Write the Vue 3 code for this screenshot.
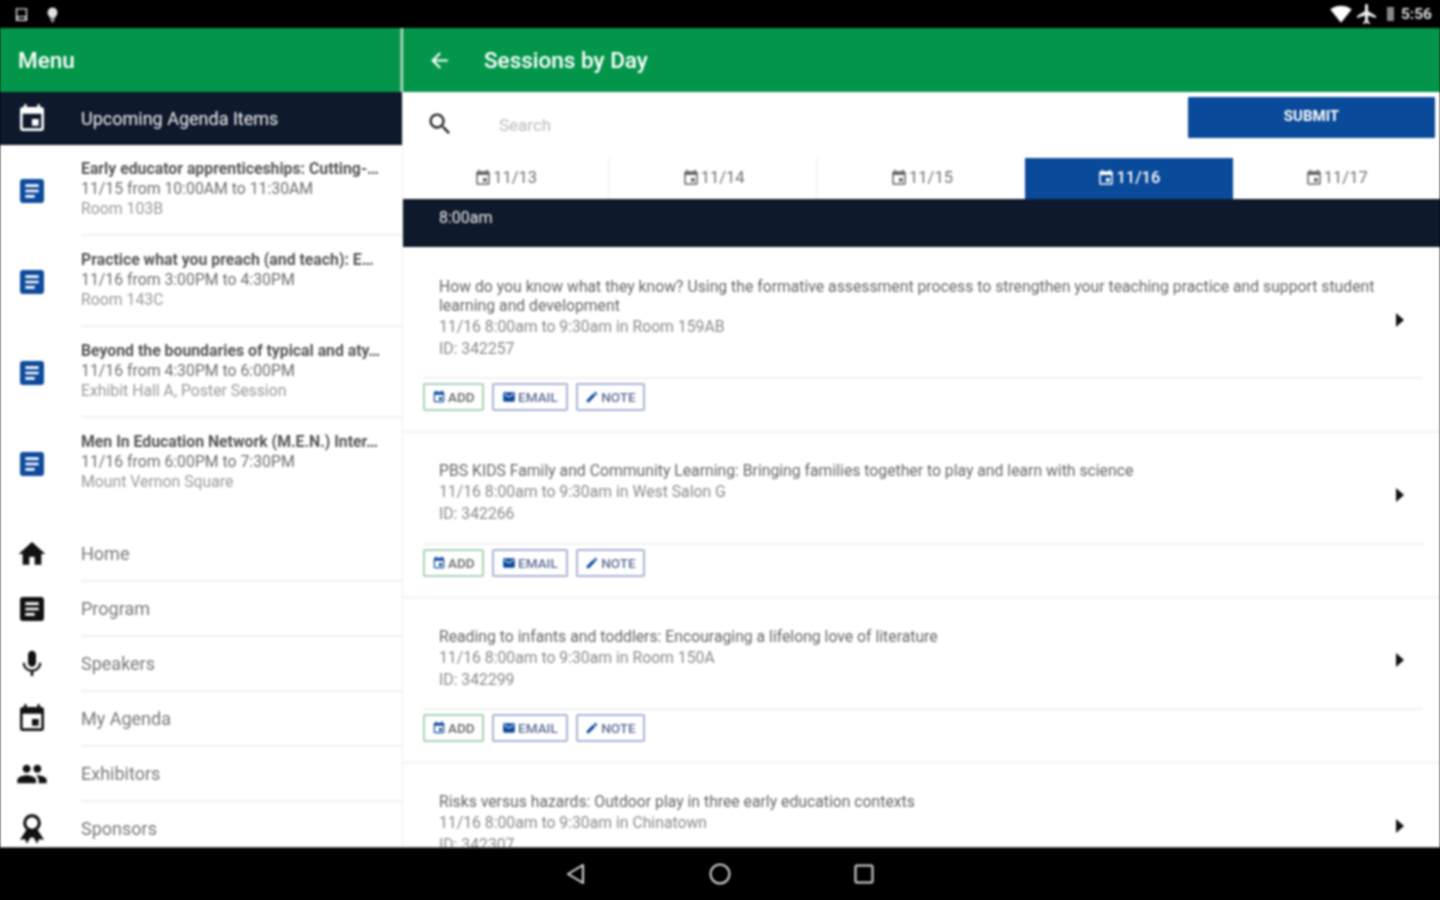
<script setup>
const p = {
  event: 'M17 12h-5v5h5v-5zM16 1v2H8V1H6v2H5c-1.11 0-1.99.9-1.99 2L3 19c0 1.1.89 2 2 2h14c1.1 0 2-.9 2-2V5c0-1.1-.9-2-2-2h-1V1h-2zm3 18H5V8h14v11z',
  doc: 'M19 3H5c-1.1 0-2 .9-2 2v14c0 1.1.9 2 2 2h14c1.1 0 2-.9 2-2V5c0-1.1-.9-2-2-2zm-5 14H7v-2h7v2zm3-4H7v-2h10v2zm0-4H7V7h10v2z',
  home: 'M10 20v-6h4v6h5v-8h3L12 3 2 12h3v8z',
  mic: 'M12 14c1.66 0 2.99-1.34 2.99-3L15 5c0-1.66-1.34-3-3-3S9 3.34 9 5v6c0 1.66 1.34 3 3 3zm5.3-3c0 3-2.54 5.1-5.3 5.1S6.7 14 6.7 11H5c0 3.41 2.72 6.23 6 6.72V21h2v-3.28c3.28-.48 6-3.3 6-6.72h-1.7z',
  people: 'M16 11c1.66 0 2.99-1.34 2.99-3S17.66 5 16 5c-1.66 0-3 1.34-3 3s1.34 3 3 3zm-8 0c1.66 0 2.99-1.34 2.99-3S9.66 5 8 5C6.34 5 5 6.34 5 8s1.34 3 3 3zm0 2c-2.33 0-7 1.17-7 3.5V19h14v-2.5c0-2.33-4.67-3.5-7-3.5zm8 0c-.29 0-.62.02-.97.05 1.16.84 1.97 1.97 1.97 3.45V19h6v-2.5c0-2.33-4.67-3.5-7-3.5z',
  sponsor: 'M12 1a6.5 6.5 0 0 0-4.2 11.5L3 20l3.8-.3L8.2 23l2.8-5 1 1 1-1 2.8 5 1.4-3.3 3.8.3-4.8-7.5A6.5 6.5 0 0 0 12 1zm0 2.2a4.3 4.3 0 1 1 0 8.6a4.3 4.3 0 0 1 0-8.6z',
  search: 'M15.5 14h-.79l-.28-.27C15.41 12.59 16 11.11 16 9.5 16 5.91 13.09 3 9.5 3S3 5.91 3 9.5 5.91 16 9.5 16c1.61 0 3.09-.59 4.23-1.57l.27.28v.79l5 4.99L20.49 19l-4.99-5zm-6 0C7.01 14 5 11.99 5 9.5S7.01 5 9.5 5 14 7.01 14 9.5 11.99 14 9.5 14z',
  back: 'M20 11H7.83l5.59-5.59L12 4l-8 8 8 8 1.41-1.41L7.83 13H20v-2z',
  right: 'M9 5l8 7-8 7z',
  email: 'M20 4H4c-1.1 0-1.99.9-1.99 2L2 18c0 1.1.9 2 2 2h16c1.1 0 2-.9 2-2V6c0-1.1-.9-2-2-2zm0 4l-8 5-8-5V6l8 5 8-5v2z',
  pencil: 'M3 17.25V21h3.75L17.81 9.94l-3.75-3.75L3 17.25zM20.71 7.04c.39-.39.39-1.02 0-1.41l-2.34-2.34c-.39-.39-1.02-.39-1.41 0l-1.83 1.83 3.75 3.75 1.83-1.83z',
  wifi: 'M12.01 21.49L23.64 7c-.45-.34-4.93-4-11.64-4C5.28 3 .81 6.66.36 7l11.63 14.49.01.01.01-.01z',
  plane: 'M21 16v-2l-8-5V3.5c0-.83-.67-1.5-1.5-1.5S10 2.67 10 3.5V9l-8 5v2l8-2.5V19l-2 1.5V22l3.5-1 3.5 1v-1.5L13 19v-5.5l8 2.5z'
}
const agenda = [
  { t: 'Early educator apprenticeships: Cutting-…', d: '11/15 from 10:00AM to 11:30AM', r: 'Room 103B' },
  { t: 'Practice what you preach (and teach): E…', d: '11/16 from 3:00PM to 4:30PM', r: 'Room 143C' },
  { t: 'Beyond the boundaries of typical and aty…', d: '11/16 from 4:30PM to 6:00PM', r: 'Exhibit Hall A, Poster Session' },
  { t: 'Men In Education Network (M.E.N.) Inter…', d: '11/16 from 6:00PM to 7:30PM', r: 'Mount Vernon Square' }
]
const menu = [
  { n: 'Home', i: p.home }, { n: 'Program', i: p.doc }, { n: 'Speakers', i: p.mic },
  { n: 'My Agenda', i: p.event }, { n: 'Exhibitors', i: p.people }, { n: 'Sponsors', i: p.sponsor }
]
const tabs = ['11/13', '11/14', '11/15', '11/16', '11/17']
const sessions = [
  { t: 'How do you know what they know? Using the formative assessment process to strengthen your teaching practice and support student learning and development', m: '11/16 8:00am to 9:30am in Room 159AB', id: 'ID: 342257' },
  { t: 'PBS KIDS Family and Community Learning: Bringing families together to play and learn with science', m: '11/16 8:00am to 9:30am in West Salon G', id: 'ID: 342266' },
  { t: 'Reading to infants and toddlers: Encouraging a lifelong love of literature', m: '11/16 8:00am to 9:30am in Room 150A', id: 'ID: 342299' },
  { t: 'Risks versus hazards: Outdoor play in three early education contexts', m: '11/16 8:00am to 9:30am in Chinatown', id: 'ID: 342307' }
]
</script>

<template>
  <div class="screen">
    <header class="status">
      <div class="status-side">
        <svg class="st-ic" viewBox="0 0 24 24"><path fill="#d8d8d8" d="M4 3h16v18H4zM6 5v9h12V5zM7 16v3h10v-3z"/></svg>
        <svg class="st-ic" viewBox="0 0 24 24"><path fill="#e2e2e2" d="M12 2a7 7 0 0 0-4 12.7V17h8v-2.3A7 7 0 0 0 12 2zM9 18h6v2H9zM10 21h4v1.5h-4z"/></svg>
      </div>
      <div class="status-right">
        <svg class="st-wifi" viewBox="0 0 24 24"><path fill="#fff" :d="p.wifi"/></svg>
        <svg class="st-plane" viewBox="0 0 24 24"><path fill="#eee" :d="p.plane"/></svg>
        <span class="battery"></span>
        <span class="clock">5:56</span>
      </div>
    </header>

    <main class="body">
      <aside class="drawer">
        <div class="bar drawer-bar">Menu</div>
        <div class="up-head">
          <svg class="ic" viewBox="0 0 24 24"><path fill="#fff" :d="p.event"/></svg>
          <span>Upcoming Agenda Items</span>
        </div>
        <div class="agenda">
          <div v-for="a in agenda" :key="a.t" class="a-row">
            <svg class="ic" viewBox="0 0 24 24"><path fill="#0d4a9c" :d="p.doc"/></svg>
            <div class="a-text">
              <div class="a-title">{{ a.t }}</div>
              <div class="a-date">{{ a.d }}</div>
              <div class="a-room">{{ a.r }}</div>
            </div>
          </div>
        </div>
        <nav class="menu">
          <div v-for="m in menu" :key="m.n" class="m-row">
            <svg class="ic" viewBox="0 0 24 24"><path fill="#111" fill-rule="evenodd" :d="m.i"/></svg>
            <span class="m-label">{{ m.n }}</span>
          </div>
        </nav>
      </aside>

      <section class="content">
        <div class="bar content-bar">
          <svg class="back" viewBox="0 0 24 24"><path fill="#fff" :d="p.back"/></svg>
          <span>Sessions by Day</span>
        </div>
        <div class="search-row">
          <svg class="search-ic" viewBox="0 0 24 24"><path fill="#222" :d="p.search"/></svg>
          <span class="search-ph">Search</span>
          <button class="submit">SUBMIT</button>
        </div>
        <div class="tabs">
          <div v-for="t in tabs" :key="t" class="tab" :class="{ on: t === '11/16' }">
            <svg class="tab-ic" viewBox="0 0 24 24"><path :fill="t === '11/16' ? '#fff' : '#666'" :d="p.event"/></svg>
            <span>{{ t }}</span>
          </div>
        </div>
        <div class="time">8:00am</div>
        <div class="list">
          <article v-for="s in sessions" :key="s.id" class="card">
            <div class="info">
              <div class="info-text">
                <div class="s-title">{{ s.t }}</div>
                <div class="s-meta">{{ s.m }}</div>
                <div class="s-meta">{{ s.id }}</div>
              </div>
              <svg class="chev" viewBox="0 0 24 24"><path fill="#111" :d="p.right"/></svg>
            </div>
            <div class="actions">
              <button class="act add"><svg viewBox="0 0 24 24"><path fill="#0d4a9c" :d="p.event"/></svg>ADD</button>
              <button class="act mail"><svg viewBox="0 0 24 24"><path fill="#0d4a9c" :d="p.email"/></svg>EMAIL</button>
              <button class="act note"><svg viewBox="0 0 24 24"><path fill="#0d4a9c" :d="p.pencil"/></svg>NOTE</button>
            </div>
          </article>
        </div>
      </section>
    </main>

    <footer class="nav">
      <svg viewBox="0 0 24 24"><path fill="none" stroke="#ddd" stroke-width="2" stroke-linejoin="round" d="M19 3v18L4 12z"/></svg>
      <svg viewBox="0 0 24 24"><circle cx="12" cy="12" r="9.5" fill="none" stroke="#ddd" stroke-width="2"/></svg>
      <svg viewBox="0 0 24 24"><rect x="3.5" y="3.5" width="17" height="17" rx="1.5" fill="none" stroke="#ddd" stroke-width="2"/></svg>
    </footer>
  </div>
</template>

<style>
html, body { background: #000; }
</style>

<style scoped>
.screen {
  width: 1440px; height: 900px; display: flex; flex-direction: column; overflow: hidden;
  background: #fff; font-family: Roboto, "Liberation Sans", sans-serif; filter: blur(0.8px);
}
.status { height: 28px; flex: none; background: #000; display: flex; justify-content: space-between; align-items: center; padding: 0 8px 0 13px; }
.status-side { display: flex; align-items: center; gap: 14px; }
.status-right { display: flex; align-items: center; }
.st-ic { width: 17px; height: 17px; }
.st-wifi { width: 22px; height: 22px; margin-right: 3px; }
.st-plane { width: 24px; height: 24px; margin-right: 8px; }
.battery { width: 7px; height: 14px; background: #888; margin-right: 7px; }
.clock { color: #ddd; font-size: 15.5px; font-weight: 700; }

.body { flex: 1; display: flex; min-height: 0; }
.drawer { width: 403px; flex: none; display: flex; flex-direction: column; overflow: hidden; border-right: 1px solid #eee; box-sizing: border-box; }
.content { flex: 1; min-width: 0; display: flex; flex-direction: column; overflow: hidden; }
.bar { height: 64px; flex: none; background: #03964a; color: #fff; font-size: 22.5px; font-weight: 500; display: flex; align-items: center; box-sizing: border-box; }
.drawer-bar { padding-left: 18px; border-right: 2px solid #7ebf98; }
.content-bar { padding-left: 24px; }
.back { width: 25px; height: 25px; margin-right: 32px; }
.ic { width: 32px; height: 32px; flex: none; }

.up-head { height: 53px; flex: none; background: #0e1a2b; color: #f2f2f2; display: flex; align-items: center; padding-left: 16px; gap: 33px; font-size: 18px; }
.agenda { flex: none; height: 381px; }
.a-row { height: 91px; display: flex; align-items: center; padding-left: 16px; gap: 33px; }
.a-text { flex: 1; min-width: 0; height: 100%; box-sizing: border-box; padding-top: 14px; border-bottom: 2px solid #f1f1f1; line-height: 20.5px; font-size: 15.8px; }
.a-row:last-child .a-text { border-bottom: 0; }
.a-title { color: #555; font-weight: 700; white-space: nowrap; line-height: 19.5px; }
.a-date { color: #6e6e6e; }
.a-room { color: #999; }
.menu { flex: none; }
.m-row { height: 55px; display: flex; align-items: center; padding-left: 16px; gap: 33px; }
.m-label { flex: 1; align-self: stretch; display: flex; align-items: center; border-bottom: 2px solid #f0f0f0; color: #777; font-size: 18px; margin-bottom: -1px; padding-top: 1px; }

.search-row { height: 60px; flex: none; display: flex; align-items: flex-start; }
.search-ic { width: 28px; height: 28px; margin: 18px 0 0 23px; flex: none; }
.search-ph { margin: 23px 0 0 45px; color: #bbb; font-size: 17px; flex: 1; }
.submit { width: 247px; height: 41px; margin: 5px 5px 0 0; padding: 0 0 3px; background: #0a4a9a; border: 0; color: #fff; font: 700 15px Roboto, sans-serif; border-radius: 1px; }
.tabs { height: 47px; flex: none; display: grid; grid-template-columns: repeat(5, 1fr); padding-top: 6px; box-sizing: border-box; }
.tab { display: flex; align-items: center; justify-content: center; gap: 1px; color: #707070; font-size: 16.5px; border-right: 2px solid #f4f4f4; padding-bottom: 2px; box-sizing: border-box; }
.tab:nth-child(3), .tab:nth-child(5) { border-right: 0; }
.tab.on { background: #0a4a9a; color: #fff; font-weight: 500; border-right: 0; }
.tab-ic { width: 18px; height: 18px; }
.time { height: 48px; flex: none; background: #0e1a2b; color: #f0f0f0; font-size: 16px; padding: 9px 0 0 36px; box-sizing: border-box; }
.list { flex: 1; min-height: 0; overflow: hidden; padding-top: 2px; }
.card { padding: 29px 17px 19px 20px; border-bottom: 3px solid #f6f6f6; }
.info { display: flex; align-items: center; padding: 0 0 17.5px 16px; border-bottom: 2px solid #f2f2f2; }
.info-text { flex: 1; min-width: 0; font-size: 15.75px; }
.s-title { color: #666; line-height: 18.5px; margin-bottom: 0.5px; }
.s-meta { color: #8a8a8a; line-height: 22px; }
.chev { width: 24px; height: 24px; flex: none; margin: 2px 12px 0 0; }
.actions { display: flex; gap: 8.5px; margin-top: 4px; }
.act { height: 28px; padding: 0 7px; background: #fff; display: flex; align-items: center; gap: 2px; font: 500 13.5px Roboto, sans-serif; color: #5a6c92; border: 2px solid #aab3d6; border-radius: 2px; }
.act svg { width: 14px; height: 14px; }
.act.add { border-color: #a9d4b6; color: #666; }
.act.mail { padding: 0 8px; }

.nav { height: 53px; flex: none; background: #000; display: flex; align-items: center; justify-content: center; gap: 120px; border-top: 1px solid #666; box-sizing: border-box; }
.nav svg { width: 24px; height: 24px; }
</style>
